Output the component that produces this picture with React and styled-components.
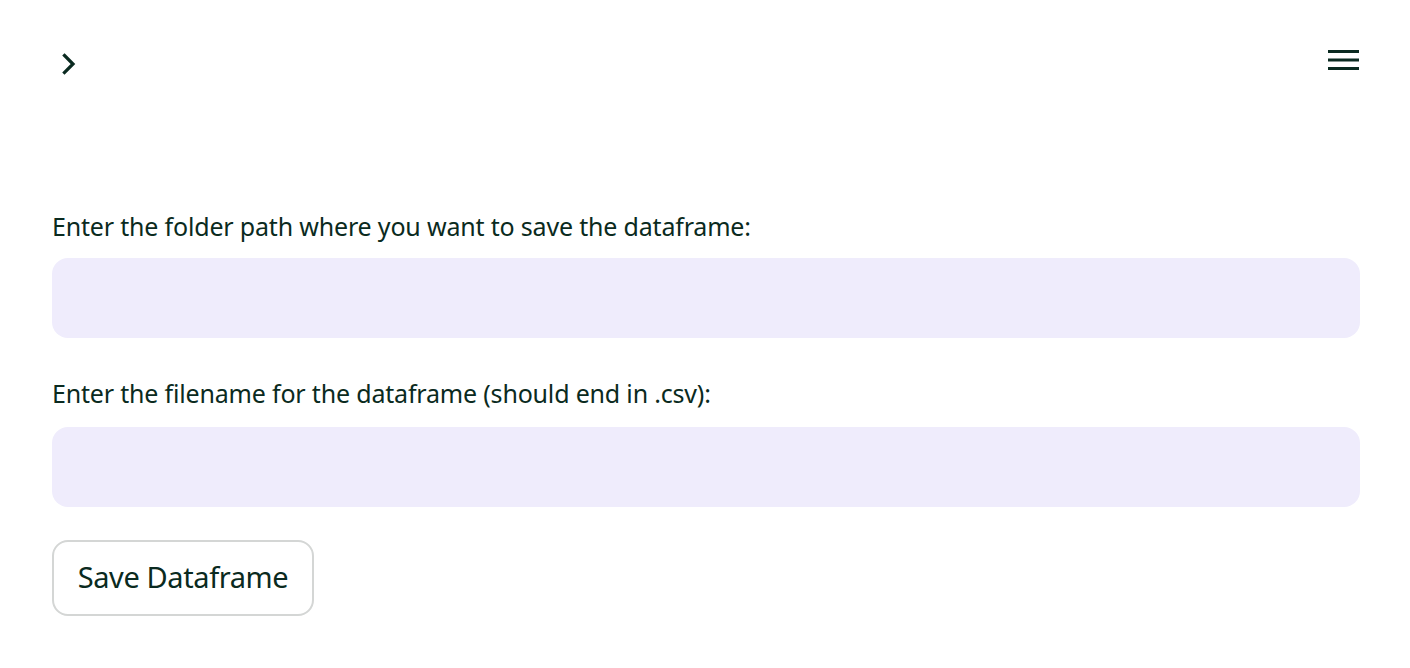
import React from "react";
import styled, { createGlobalStyle } from "styled-components";

const Global = createGlobalStyle`
  html, body { margin: 0; padding: 0; background: #ffffff; }
  body { font-family: "Noto Sans", "Open Sans", sans-serif; color: #0a2a20; }
  * { box-sizing: border-box; }
`;

const Page = styled.div`
  width: 1410px;
  height: 668px;
  padding: 0 50px 0 52px;
  display: flex;
  flex-direction: column;
  overflow: hidden;
`;

const Header = styled.header`
  height: 120px;
  display: flex;
  justify-content: space-between;
  align-items: flex-start;
`;

const IconButton = styled.button`
  border: none;
  background: transparent;
  padding: 0;
  margin-top: ${(p) => p.$top}px;
  margin-left: ${(p) => p.$left || 0}px;
  display: flex;
  color: #0a2a20;
  cursor: pointer;
`;

const Main = styled.main`
  margin-top: 86px;
  display: flex;
  flex-direction: column;
`;

const Field = styled.div`
  display: flex;
  flex-direction: column;
  margin-bottom: ${(p) => p.$mb}px;
`;

const Label = styled.label`
  font-size: 25px;
  line-height: 40px;
  height: 40px;
  letter-spacing: -0.18px;
  white-space: nowrap;
  color: #0a2a20;
  margin-bottom: ${(p) => p.$mb}px;
`;

const Input = styled.input`
  width: 1308px;
  height: 80px;
  border: none;
  border-radius: 16px;
  background: #efecfc;
  outline: none;
  padding: 0 24px;
  font-family: inherit;
  font-size: 28px;
  color: #0a2a20;
`;

const Button = styled.button`
  align-self: flex-start;
  width: 262px;
  height: 76px;
  border: 2px solid #d4d6d5;
  border-radius: 16px;
  background: #ffffff;
  font-family: "Noto Sans", "Open Sans", sans-serif;
  font-size: 29px;
  letter-spacing: -0.4px;
  color: #0a2a20;
  padding: 0 0 4px;
  cursor: pointer;
`;

const Chevron = () => (
  <svg width="14" height="22" viewBox="0 0 14 22">
    <path d="M2.5 2.5 L11 11 L2.5 19.5" fill="none" stroke="#0a2a20" strokeWidth="3.2" strokeLinecap="square" />
  </svg>
);

const Hamburger = () => (
  <svg width="32" height="22" viewBox="0 0 32 22">
    <rect x="0" y="0" width="31" height="3" fill="#0a2a20" />
    <rect x="0" y="8.5" width="31" height="3" fill="#0a2a20" />
    <rect x="0" y="17" width="31" height="3" fill="#0a2a20" />
  </svg>
);

export default function App() {
  return (
    <>
      <Global />
      <Page>
        <Header>
          <IconButton $top={53} $left={10} aria-label="Open sidebar">
            <Chevron />
          </IconButton>
          <IconButton $top={50} aria-label="Menu">
            <Hamburger />
          </IconButton>
        </Header>
        <Main>
          <Field $mb={35}>
            <Label $mb={12}>Enter the folder path where you want to save the dataframe:</Label>
            <Input type="text" />
          </Field>
          <Field $mb={33}>
            <Label $mb={14}>Enter the filename for the dataframe (should end in .csv):</Label>
            <Input type="text" />
          </Field>
          <Button>Save Dataframe</Button>
        </Main>
      </Page>
    </>
  );
}
